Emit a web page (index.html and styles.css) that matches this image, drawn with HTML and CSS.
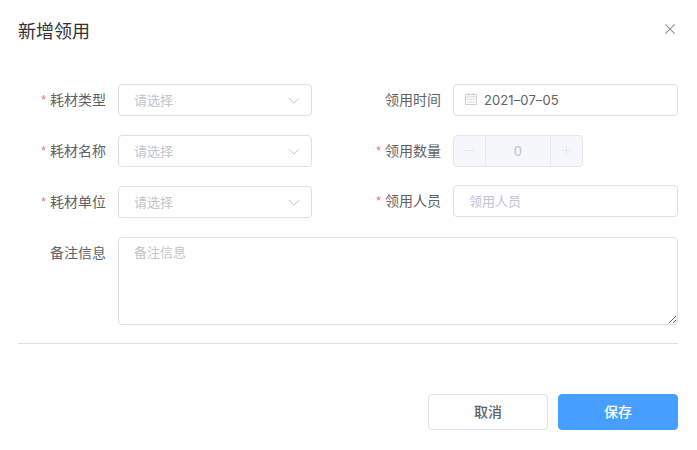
FILE: index.html
```html
<!DOCTYPE html>
<html lang="zh-CN">

<head>
    <meta charset="UTF-8">
    <meta name="viewport" content="width=device-width, initial-scale=1.0">
    <title>新增领用</title>
    <link rel="stylesheet" href="styles.css">
</head>

<body>

<div class="dialog">
    <header class="dialog-header">
        <h2 class="dialog-title">新增领用</h2>
        <button type="button" class="close-btn" aria-label="关闭">
            <svg width="12" height="12" viewBox="0 0 12 12"><path d="M1.3 1.3l9.4 9.4M10.7 1.3l-9.4 9.4"/></svg>
        </button>
    </header>

    <form class="form">
        <div class="form-columns">
            <!-- Left column -->
            <div class="column column-left">
                <div class="form-item">
                    <label class="label required">耗材类型</label>
                    <div class="control select">
                        <span class="placeholder">请选择</span>
                        <svg class="arrow" width="12" height="8" viewBox="0 0 12 8"><path d="M1 1.2l5 5 5-5"/></svg>
                    </div>
                </div>
                <div class="form-item">
                    <label class="label required">耗材名称</label>
                    <div class="control select">
                        <span class="placeholder">请选择</span>
                        <svg class="arrow" width="12" height="8" viewBox="0 0 12 8"><path d="M1 1.2l5 5 5-5"/></svg>
                    </div>
                </div>
                <div class="form-item">
                    <label class="label required">耗材单位</label>
                    <div class="control select">
                        <span class="placeholder">请选择</span>
                        <svg class="arrow" width="12" height="8" viewBox="0 0 12 8"><path d="M1 1.2l5 5 5-5"/></svg>
                    </div>
                </div>
            </div>

            <!-- Right column -->
            <div class="column column-right">
                <div class="form-item">
                    <label class="label">领用时间</label>
                    <div class="control date">
                        <svg class="calendar" width="12" height="12" viewBox="0 0 12 12">
                            <path d="M.5 1.5h11v10H.5zM.5 4h11M3.5 0v2.5M8.5 0v2.5"/>
                            <path class="days" d="M2.5 6.5h7M2.5 9h7"/>
                        </svg>
                        <span class="date-value">2021–07–05</span>
                    </div>
                </div>
                <div class="form-item">
                    <label class="label required">领用数量</label>
                    <div class="number">
                        <span class="step"><svg width="10" height="10" viewBox="0 0 10 10"><path d="M0 4.5h9"/></svg></span>
                        <span class="number-value">0</span>
                        <span class="step"><svg width="10" height="10" viewBox="0 0 10 10"><path d="M0 4.5h9M4.5 0v9"/></svg></span>
                    </div>
                </div>
                <div class="form-item">
                    <label class="label required">领用人员</label>
                    <input class="control" type="text" placeholder="领用人员">
                </div>
            </div>
        </div>

        <div class="form-item remark">
            <label class="label">备注信息</label>
            <textarea class="control textarea" placeholder="备注信息"></textarea>
        </div>

        <footer class="dialog-footer">
            <button type="button" class="btn">取消</button>
            <button type="button" class="btn btn-primary">保存</button>
        </footer>
    </form>
</div>

</body>

</html>
```

FILE: styles.css
```css
* {
    margin: 0;
    padding: 0;
    box-sizing: border-box;
}

body {
    font-family: Inter, 'Noto Sans CJK SC', sans-serif;
    font-size: 14px;
    color: #606266;
    background-color: #fff;
}

.dialog {
    padding: 18px 19px 20px 18px;
}

.dialog-header {
    display: flex;
    justify-content: space-between;
    align-items: flex-start;
    height: 66px;
}

.dialog-title {
    font-size: 18px;
    font-weight: 400;
    line-height: 28px;
    color: #303133;
}

.close-btn {
    width: 16px;
    height: 22px;
    border: none;
    background: none;
    cursor: pointer;
}

.close-btn svg {
    display: block;
    margin: auto;
    stroke: #909399;
    stroke-width: 1.1;
}

.form-columns {
    display: flex;
    justify-content: space-between;
}

.column {
    display: flex;
    flex-direction: column;
    gap: 19px;
}

.column-left {
    width: 294px;
}

.column-right {
    width: 325px;
}

.column-right .form-item:last-child {
    margin-top: -1px;
}

.form-item {
    display: flex;
}

.label {
    flex: none;
    width: 100px;
    height: 32px;
    padding-right: 12px;
    line-height: 32px;
    text-align: right;
}

.required::before {
    content: '*';
    margin-right: 4px;
    font-family: 'Liberation Sans', sans-serif;
    font-size: 12px;
    line-height: 1;
    vertical-align: 1px;
    color: #f56c6c;
}

.control {
    flex: 1;
    min-width: 0;
    height: 32px;
    padding: 0 15px;
    border: 1px solid #dcdfe6;
    border-radius: 4px;
    background-color: #fff;
    font-family: inherit;
    font-size: 13px;
    line-height: 30px;
    color: #606266;
    outline: none;
}

.control::placeholder,
.placeholder {
    color: #c0c4cc;
}

.select {
    display: flex;
    justify-content: space-between;
    align-items: center;
    padding-right: 11px;
    cursor: pointer;
}

.arrow,
.calendar {
    fill: none;
    stroke: #c0c4cc;
    stroke-width: 1;
}

.arrow {
    margin-top: 2px;
}

.date {
    display: flex;
    align-items: center;
    padding-left: 11px;
}

.date-value {
    letter-spacing: .1px;
}

.calendar {
    margin: 0 7px 2px 0;
    stroke: #cdd0d7;
}

.calendar .days {
    stroke-dasharray: 2 .7;
}

.number {
    display: flex;
    width: 130px;
    height: 32px;
    border: 1px solid #e4e7ed;
    border-radius: 4px;
    background-color: #f5f7fa;
    color: #c0c4cc;
    cursor: not-allowed;
}

.step {
    display: flex;
    justify-content: center;
    align-items: center;
    width: 32px;
    border-right: 1px solid #e4e7ed;
}

.step:last-child {
    border-right: none;
    border-left: 1px solid #e4e7ed;
}

.step svg {
    stroke: #e4e7ed;
    stroke-width: 1;
}

.number-value {
    flex: 1;
    font-family: 'Liberation Sans', sans-serif;
    font-size: 14px;
    line-height: 31px;
    text-align: center;
}

.remark {
    margin-top: 19px;
    padding-bottom: 18px;
    border-bottom: 1px solid #dcdfe6;
}

.textarea {
    height: 88px;
    padding: 4px 15px;
    line-height: 20px;
    resize: vertical;
}

.dialog-footer {
    display: flex;
    justify-content: flex-end;
    gap: 10px;
    padding-top: 50px;
}

.btn {
    width: 120px;
    height: 36px;
    padding-bottom: 2px;
    border: 1px solid #dcdfe6;
    border-radius: 4px;
    background-color: #fff;
    font-family: inherit;
    font-size: 14px;
    font-weight: 500;
    color: #606266;
    cursor: pointer;
}

.btn-primary {
    border-color: #469fff;
    background-color: #469fff;
    color: #fff;
}
```
